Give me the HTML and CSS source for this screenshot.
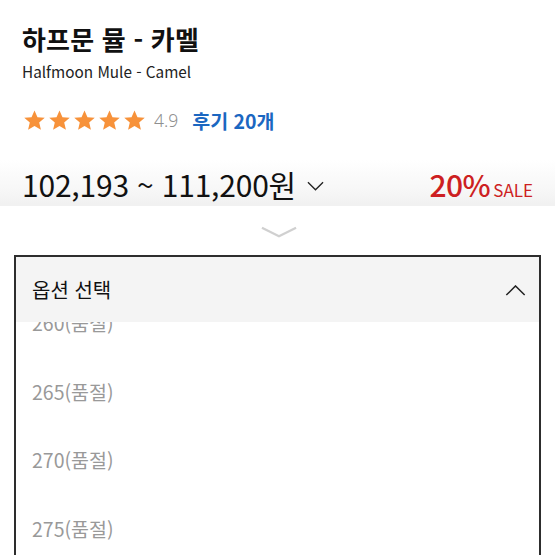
FILE: index.html
```html
<!DOCTYPE html>
<html lang="ko">
<head>
<meta charset="utf-8">
<link rel="stylesheet" href="styles.css">
</head>
<body>
<div class="page">
  <section class="info">
    <h1 class="title">하프문 뮬 - 카멜</h1>
    <p class="subtitle">Halfmoon Mule - Camel</p>
    <div class="rating">
      <span class="stars">
        <svg viewBox="0 0 24 24"><path d="M12 1.5l3.1 7.1 7.6.6-5.8 5 1.8 7.5L12 17.7l-6.7 4 1.8-7.5-5.8-5 7.6-.6z"/></svg>
        <svg viewBox="0 0 24 24"><path d="M12 1.5l3.1 7.1 7.6.6-5.8 5 1.8 7.5L12 17.7l-6.7 4 1.8-7.5-5.8-5 7.6-.6z"/></svg>
        <svg viewBox="0 0 24 24"><path d="M12 1.5l3.1 7.1 7.6.6-5.8 5 1.8 7.5L12 17.7l-6.7 4 1.8-7.5-5.8-5 7.6-.6z"/></svg>
        <svg viewBox="0 0 24 24"><path d="M12 1.5l3.1 7.1 7.6.6-5.8 5 1.8 7.5L12 17.7l-6.7 4 1.8-7.5-5.8-5 7.6-.6z"/></svg>
        <svg viewBox="0 0 24 24"><path d="M12 1.5l3.1 7.1 7.6.6-5.8 5 1.8 7.5L12 17.7l-6.7 4 1.8-7.5-5.8-5 7.6-.6z"/></svg>
      </span>
      <span class="score">4.9</span>
      <span class="reviews">후기 20개</span>
    </div>
    <div class="price-row">
      <div class="price">102,193 ~ 111,200원
        <svg class="price-chev" viewBox="0 0 18 10"><path d="M1 1l8 8 8-8"/></svg>
      </div>
      <div class="sale"><span class="pct">20%</span><span class="sale-lbl">SALE</span></div>
    </div>
  </section>
  <section class="sheet">
    <div class="handle">
      <svg viewBox="0 0 38 12"><path d="M1 1.5l18 9 18-9"/></svg>
    </div>
    <div class="select">
      <div class="select-head">
        <span>옵션 선택</span>
        <svg class="up" viewBox="0 0 22 12"><path d="M1 11l10-10 10 10"/></svg>
      </div>
      <div class="viewport">
        <ul class="options">
          <li>260(품절)</li>
          <li>265(품절)</li>
          <li>270(품절)</li>
          <li>275(품절)</li>
        </ul>
      </div>
    </div>
  </section>
</div>
</body>
</html>
```

FILE: styles.css
```css
* { box-sizing: border-box; }
html, body { margin: 0; padding: 0; background: #fff; }
body {
  font-family: "Noto Sans CJK KR", "Noto Sans", sans-serif;
  color: #111;
  width: 555px;
  height: 555px;
  overflow: hidden;
}
.page { display: flex; flex-direction: column; }
.info {
  padding: 17px 22px 0 22px;
  background: linear-gradient(to bottom, #fff 0, #fff 160px, #f7f7f7 190px, #f1f1f1 204px);
  height: 206px;
}
.title {
  margin: 0;
  font-size: 26px;
  font-weight: 700;
  line-height: 44px;
  letter-spacing: 0.2px;
}
.subtitle {
  margin: 0;
  font-size: 15.3px;
  line-height: 20px;
  margin-top: 0;
  color: #222;
}
.rating {
  display: flex;
  align-items: center;
  margin-top: 26px;
  height: 26px;
}
.stars { display: flex; gap: 2px; margin-left: 1px; }
.stars svg { width: 23px; height: 23px; fill: #f7923a; }
.score { color: #8f8f8f; font-size: 17.5px; margin-left: 8px; font-family: "Noto Sans", sans-serif; font-weight: 300; }
.reviews { color: #1b67c1; font-weight: 700; font-size: 19.5px; margin-left: 14px; }
.price-row {
  display: flex;
  justify-content: space-between;
  align-items: center;
  margin-top: 29px;
}
.price {
  font-size: 30px;
  line-height: 40px;
  display: flex;
  align-items: center;
  letter-spacing: -0.2px;
}
.price-chev { width: 17px; height: 10px; margin-left: 11px; margin-top: 4px; fill: none; stroke: #222; stroke-width: 1.4; }
.sale { color: #cd1f22; display: flex; align-items: baseline; }
.pct { font-size: 30px; font-weight: 500; letter-spacing: -0.5px; }
.sale-lbl { font-size: 17px; margin-left: 3px; }
.sheet { background: #fff; display: flex; flex-direction: column; }
.handle { display: flex; justify-content: center; padding-top: 20px; height: 49px; }
.handle svg { width: 36px; height: 12px; fill: none; stroke: #d0d0d0; stroke-width: 2.4; margin-left: 2px; }
.select {
  margin: 0 14px 0 14px;
  border: 2px solid #2d2d2d;
  border-bottom: none;
  height: 320px;
  overflow: hidden;
}
.select-head {
  background: #f4f4f4;
  height: 65px;
  display: flex;
  align-items: center;
  justify-content: space-between;
  padding: 0 13px 0 16px;
  font-size: 20px;
  color: #111;
}
.up { width: 21px; height: 11px; fill: none; stroke: #222; stroke-width: 1.6; margin-top: 2px; }
.viewport { height: 260px; overflow: hidden; }
.options { list-style: none; margin: -33px 0 0 0; padding: 0 0 0 16px; }
.options li {
  height: 68.5px;
  line-height: 68.5px;
  font-size: 19.5px;
  color: #999;
}
```
